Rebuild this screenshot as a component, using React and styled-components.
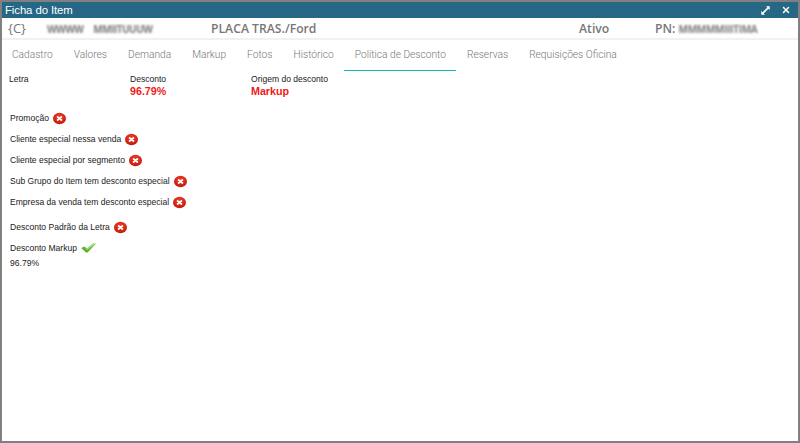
import React from "react";
import styled, { createGlobalStyle } from "styled-components";
import { X } from "lucide-react";

const GlobalStyle = createGlobalStyle`
  html, body {
    margin: 0;
    padding: 0;
    background: #fff;
  }
  #root {
    width: 800px;
    height: 443px;
  }
`;

const Window = styled.div`
  box-sizing: border-box;
  width: 800px;
  height: 443px;
  display: flex;
  flex-direction: column;
  background: #fff;
  border: 2px solid #808080;
  font-family: "Liberation Sans", Arial, sans-serif;
  overflow: hidden;
`;

const TitleBar = styled.div`
  height: 16px;
  flex: none;
  display: flex;
  align-items: center;
  justify-content: space-between;
  padding: 0 7px 0 3px;
  background: #266785;
  color: #fff;
  font-size: 11.4px;
  letter-spacing: -0.1px;
`;

const TitleActions = styled.div`
  display: flex;
  align-items: center;
  gap: 11px;
`;

const ItemHeader = styled.div`
  height: 20px;
  flex: none;
  display: grid;
  grid-template-columns: 39px 164px 368px 76px 1fr;
  align-items: center;
  padding-left: 6px;
  border-bottom: 2px solid #f1f1f1;
  color: #777;
  font-family: "Open Sans", sans-serif;
  font-weight: 600;
  font-size: 12.2px;
  white-space: nowrap;
`;

const Code = styled.span`
  font-weight: 400;
  font-size: 13px;
`;

const Blurred = styled.span`
  display: inline-block;
  filter: blur(1.3px);
  font-weight: 700;
  font-size: 10px;
  letter-spacing: ${p => p.$spacing || 0}px;
  margin-right: ${p => p.$gap || 0}px;
  color: #777;
`;

const Tabs = styled.div`
  height: 31px;
  flex: none;
  display: flex;
  margin-left: -0.5px;
  font-family: Roboto, sans-serif;
  font-weight: 300;
  font-size: 10.2px;
`;

const Tab = styled.div`
  box-sizing: border-box;
  display: flex;
  align-items: center;
  height: 31px;
  padding: 0 10.5px 2px;
  color: #777;
  white-space: nowrap;
  border-bottom: 1px solid ${p => (p.$active ? "#10b5b5" : "transparent")};
`;

const Content = styled.div`
  flex: 1;
  padding: 3px 0 0 7px;
  font-size: 8.55px;
  color: #222;
`;

const Summary = styled.div`
  display: grid;
  grid-template-columns: 121px 121px 1fr;
  margin-bottom: 10.5px;
`;

const SummaryLabel = styled.div`
  height: 11px;
  line-height: 11px;
`;

const SummaryValue = styled.div`
  color: #f01818;
  font-size: 10.7px;
  font-weight: 700;
  line-height: 12px;
`;

const Rule = styled.div`
  display: flex;
  align-items: center;
  gap: 4px;
  height: 21px;
  padding-left: 1px;
  margin-top: ${p => (p.$spaced ? 4 : 0)}px;
`;

const RuleValue = styled.div`
  padding-left: 1px;
  line-height: 11px;
  margin-top: -1px;
`;

const CrossIcon = () => (
  <svg width="13" height="13" viewBox="0 0 13 13">
    <defs>
      <radialGradient id="crossFill" cx="50%" cy="35%" r="70%">
        <stop offset="0%" stopColor="#f0402a" />
        <stop offset="100%" stopColor="#c01608" />
      </radialGradient>
    </defs>
    <ellipse cx="6.5" cy="6.5" rx="6.5" ry="5.8" fill="url(#crossFill)" />
    <path d="M4.6 5 L8.4 8 M8.4 5 L4.6 8" stroke="#fff" strokeWidth="1.8" strokeLinecap="round" />
  </svg>
);

const CheckIcon = () => (
  <svg width="15" height="10" viewBox="0 0 15 10">
    <path d="M0.2 5 L3.4 3.6 L6 5.6 L12.2 0.6 L14.8 0.8 L6.6 9.6 L5 9.6 Z" fill="#5cb531" />
    <path d="M3.4 3.6 L6 5.6 L12.2 0.6 L14.8 0.8 L6 7 Z" fill="#a5e077" />
  </svg>
);

const ExpandIcon = () => (
  <svg width="9" height="9" viewBox="0 0 9 9">
    <path d="M5 0.3 H8.7 V4 L7.4 2.7 L2.7 7.4 L4 8.7 H0.3 V5 L1.6 6.3 L6.3 1.6 Z" fill="#fff" />
  </svg>
);

const rules = [
  { label: "Promoção" },
  { label: "Cliente especial nessa venda" },
  { label: "Cliente especial por segmento" },
  { label: "Sub Grupo do Item tem desconto especial" },
  { label: "Empresa da venda tem desconto especial" },
  { label: "Desconto Padrão da Letra", spaced: true }
];

const tabs = [
  "Cadastro",
  "Valores",
  "Demanda",
  "Markup",
  "Fotos",
  "Histórico",
  "Política de Desconto",
  "Reservas",
  "Requisições Oficina"
];

const App = () => (
  <>
    <GlobalStyle />
    <Window>
      <TitleBar>
        <span>Ficha do Item</span>
        <TitleActions>
          <ExpandIcon />
          <X size={10} strokeWidth={3.5} color="#fff" />
        </TitleActions>
      </TitleBar>
      <ItemHeader>
        <Code>{"{C}"}</Code>
        <span>
          <Blurred $spacing={-0.6} $gap={10}>WWWW</Blurred>
          <Blurred $spacing={-0.5}>MMIITUUUW</Blurred>
        </span>
        <span>PLACA TRAS./Ford</span>
        <span>Ativo</span>
        <span>
          PN: <Blurred $spacing={-0.3}>MMMMMIIITIMA</Blurred>
        </span>
      </ItemHeader>
      <Tabs>
        {tabs.map(tab => (
          <Tab key={tab} $active={tab === "Política de Desconto"}>
            {tab}
          </Tab>
        ))}
      </Tabs>
      <Content>
        <Summary>
          <div>
            <SummaryLabel>Letra</SummaryLabel>
          </div>
          <div>
            <SummaryLabel>Desconto</SummaryLabel>
            <SummaryValue>96.79%</SummaryValue>
          </div>
          <div>
            <SummaryLabel>Origem do desconto</SummaryLabel>
            <SummaryValue>Markup</SummaryValue>
          </div>
        </Summary>
        {rules.map(rule => (
          <Rule key={rule.label} $spaced={rule.spaced}>
            {rule.label}
            <CrossIcon />
          </Rule>
        ))}
        <Rule>
          Desconto Markup
          <CheckIcon />
        </Rule>
        <RuleValue>96.79%</RuleValue>
      </Content>
    </Window>
  </>
);

export default App;
